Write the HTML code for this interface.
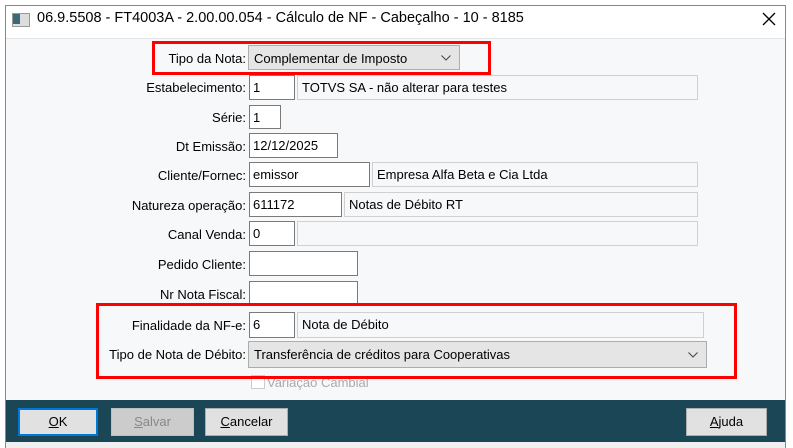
<!DOCTYPE html><html><head><style>
body{margin:0;width:793px;height:448px;background:#fff;position:relative;overflow:hidden;font-family:"Liberation Sans",sans-serif;font-size:13px;color:#000}
.a{position:absolute}
.l{position:absolute;right:547px;text-align:right;white-space:nowrap;font-size:13px}
.i{position:absolute;background:#fff;border:1px solid #7a7a7a;box-sizing:border-box;padding:4px 3px 0;font-size:13px;white-space:nowrap}
.d{position:absolute;background:#f7f8fa;border:1px solid #d0d0d0;box-sizing:border-box;padding:4px 4px 0;font-size:13px;white-space:nowrap}
.c{position:absolute;background:#e5e5e5;border:1px solid #adadad;box-sizing:border-box;padding:5px 5px 0;font-size:13px;white-space:nowrap}
.c svg{position:absolute;right:8px;top:9px}
.r{position:absolute;border:3px solid #f00;box-sizing:border-box}
.b{position:absolute;top:408px;height:28px;background:#e1e1e1;border:1px solid #adadad;box-sizing:border-box;text-align:center;line-height:26px;font-size:13px}
</style></head><body>
<div class="a" style="left:5px;top:5px;width:781px;height:443px;border:1px solid #888;border-bottom:none;box-sizing:border-box"></div>
<div class="a" style="left:12px;top:13px;width:16px;height:12px;background:#ddd;border:1px solid #999"><div style="width:7px;height:10px;background:#3a6a7a"></div></div>
<div class="a" style="left:37px;top:10px;font-size:14.5px">06.9.5508 - FT4003A - 2.00.00.054 - Cálculo de NF - Cabeçalho - 10 - 8185</div>
<svg class="a" style="left:762px;top:12px" width="14" height="14"><path d="M1 1L13 13M13 1L1 13" stroke="#000" stroke-width="1.3"/></svg>
<div class="a" style="left:6px;top:38px;width:779px;height:362px;background:#f7f8fa;border-top:1px solid #e4e4e4"></div>

<div class="l" style="top:51px">Tipo da Nota:</div>
<div class="c" style="left:248px;top:45px;width:212px;height:25px">Complementar de Imposto<svg width="10" height="6"><path d="M0.5 0.5L5 5L9.5 0.5" fill="none" stroke="#444"/></svg></div>
<div class="r" style="left:152px;top:41px;width:339px;height:34px"></div>

<div class="l" style="top:80px">Estabelecimento:</div>
<div class="i" style="left:249px;top:75px;width:46px;height:25px">1</div>
<div class="d" style="left:297px;top:75px;width:401px;height:25px">TOTVS SA - não alterar para testes</div>

<div class="l" style="top:110px">Série:</div>
<div class="i" style="left:249px;top:105px;width:32px;height:24px">1</div>

<div class="l" style="top:139px">Dt Emissão:</div>
<div class="i" style="left:249px;top:133px;width:89px;height:25px">12/12/2025</div>

<div class="l" style="top:168px">Cliente/Fornec:</div>
<div class="i" style="left:249px;top:162px;width:121px;height:25px">emissor</div>
<div class="d" style="left:372px;top:162px;width:326px;height:25px">Empresa Alfa Beta e Cia Ltda</div>

<div class="l" style="top:198px">Natureza operação:</div>
<div class="i" style="left:249px;top:192px;width:93px;height:25px">611172</div>
<div class="d" style="left:344px;top:192px;width:354px;height:25px">Notas de Débito RT</div>

<div class="l" style="top:227px">Canal Venda:</div>
<div class="i" style="left:249px;top:221px;width:46px;height:25px">0</div>
<div class="d" style="left:297px;top:221px;width:401px;height:25px"></div>

<div class="l" style="top:257px">Pedido Cliente:</div>
<div class="i" style="left:249px;top:251px;width:109px;height:25px"></div>

<div class="l" style="top:287px">Nr Nota Fiscal:</div>
<div class="i" style="left:249px;top:281px;width:109px;height:25px"></div>

<div class="l" style="top:318px">Finalidade da NF-e:</div>
<div class="i" style="left:249px;top:312px;width:46px;height:26px">6</div>
<div class="d" style="left:297px;top:312px;width:407px;height:26px">Nota de Débito</div>

<div class="l" style="top:347px">Tipo de Nota de Débito:</div>
<div class="c" style="left:248px;top:341px;width:459px;height:27px">Transferência de créditos para Cooperativas<svg width="10" height="6" style="top:10px"><path d="M0.5 0.5L5 5L9.5 0.5" fill="none" stroke="#444"/></svg></div>

<div class="a" style="left:251px;top:375px;width:12px;height:12px;border:1px solid #ccc;background:#fff"></div>
<div class="a" style="left:267px;top:375px;color:#aaa">Variação Cambial</div>
<div class="r" style="left:96px;top:303px;width:641px;height:76px"></div>

<div class="a" style="left:6px;top:400px;width:779px;height:42px;background:#1a4656"></div>
<div class="a" style="left:6px;top:442px;width:779px;height:6px;background:#f0f0f0"></div>
<div class="b" style="left:18px;width:80px;border:2px solid #0078d7;line-height:24px"><u>O</u>K</div>
<div class="b" style="left:111px;width:83px;background:#ccc;border-color:#bfbfbf;color:#888"><u>S</u>alvar</div>
<div class="b" style="left:205px;width:83px"><u>C</u>ancelar</div>
<div class="b" style="left:686px;width:81px"><u>A</u>juda</div>
</body></html>
